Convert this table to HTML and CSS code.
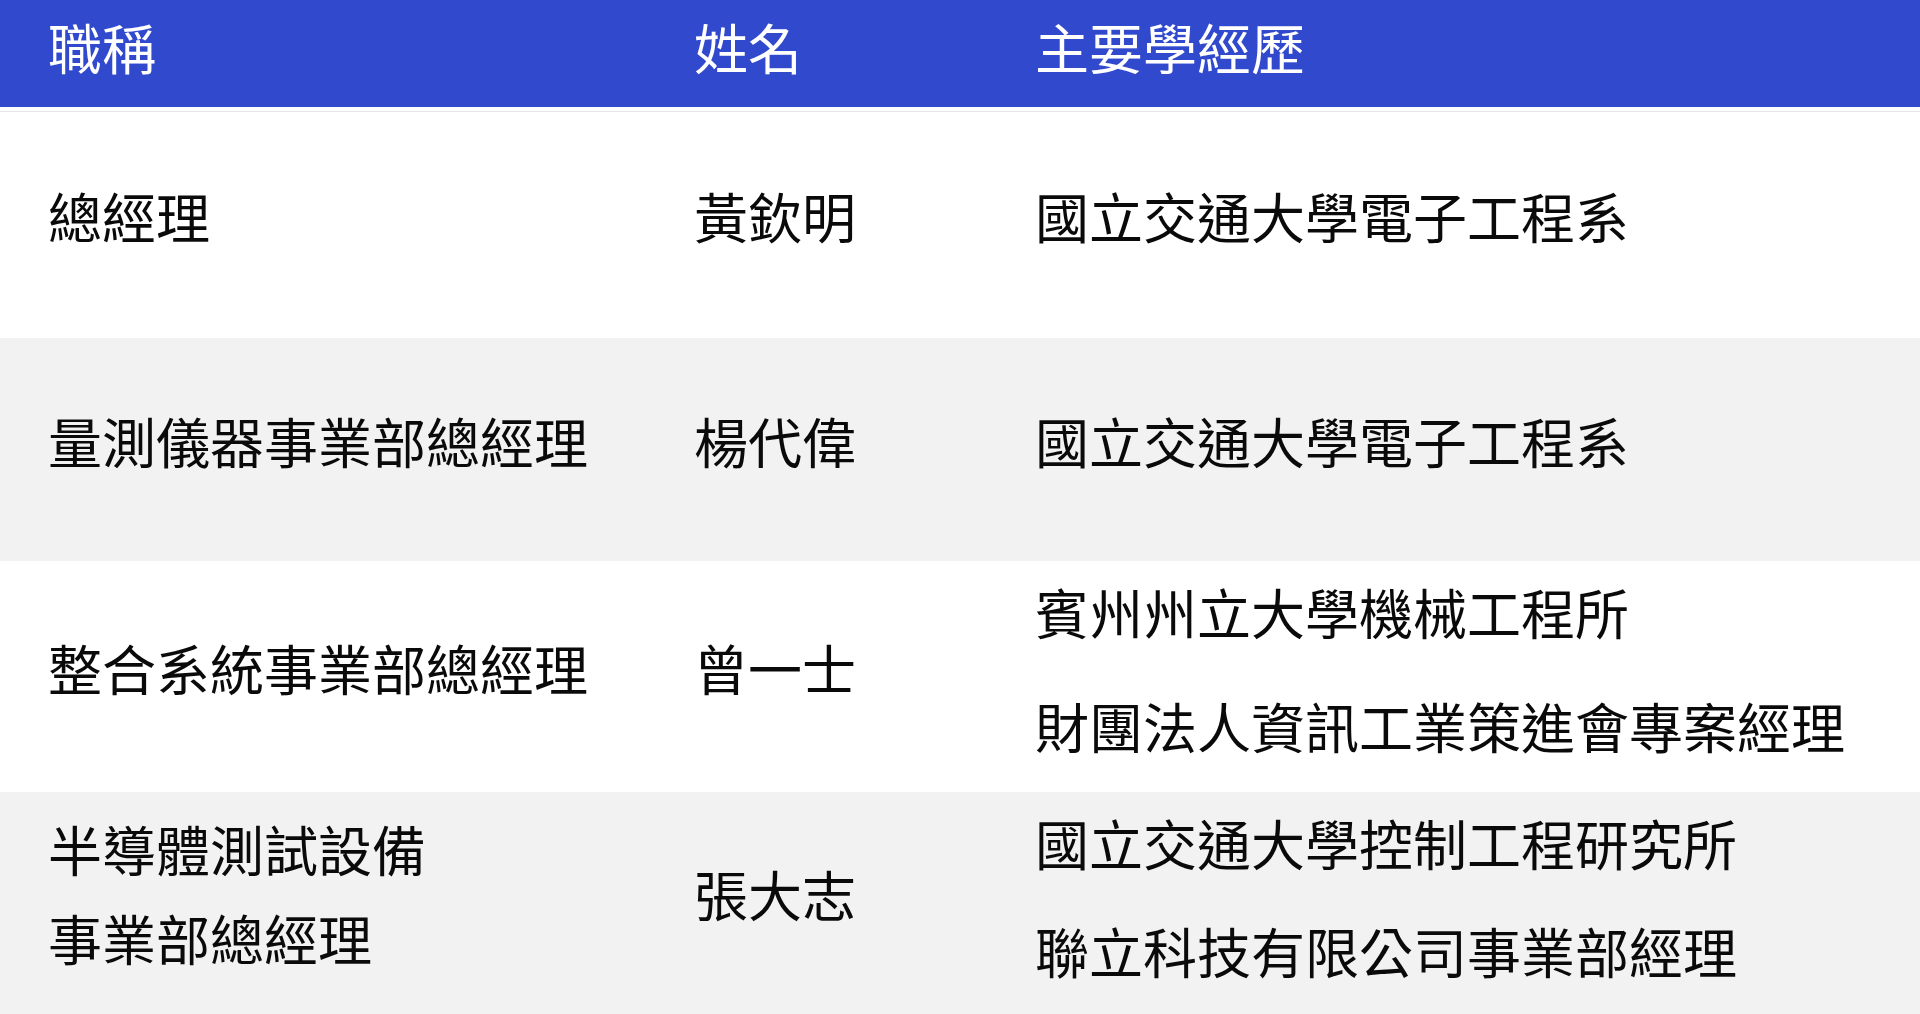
FILE: index.html
```html
<!DOCTYPE html>
<html lang="zh-Hant">
<head>
<meta charset="utf-8">
<title>經營團隊</title>
<link rel="stylesheet" href="styles.css">
</head>
<body>
<div class="team">
  <div class="row head">
    <div class="cell c1">職稱</div>
    <div class="cell c2">姓名</div>
    <div class="cell c3">主要學經歷</div>
  </div>
  <div class="sep"></div>
  <div class="row r1">
    <div class="cell c1">總經理</div>
    <div class="cell c2">黃欽明</div>
    <div class="cell c3"><p>國立交通大學電子工程系</p></div>
  </div>
  <div class="row r2 alt">
    <div class="cell c1">量測儀器事業部總經理</div>
    <div class="cell c2">楊代偉</div>
    <div class="cell c3"><p>國立交通大學電子工程系</p></div>
  </div>
  <div class="row r3">
    <div class="cell c1">整合系統事業部總經理</div>
    <div class="cell c2">曾一士</div>
    <div class="cell c3 multi wide"><p>賓州州立大學機械工程所</p><p>財團法人資訊工業策進會專案經理</p></div>
  </div>
  <div class="row r4 alt">
    <div class="cell c1 two"><span>半導體測試設備</span><span>事業部總經理</span></div>
    <div class="cell c2">張大志</div>
    <div class="cell c3 multi narrow"><p>國立交通大學控制工程研究所</p><p>聯立科技有限公司事業部經理</p></div>
  </div>
</div>
</body>
</html>
```
FILE: styles.css
```css
html, body {
  margin: 0;
  padding: 0;
  background: #ffffff;
}
body {
  font-family: "Noto Sans CJK TC", "Noto Sans CJK SC", "Noto Sans", sans-serif;
  font-size: 54px;
  color: #0a0a0a;
  width: 1920px;
  height: 1014px;
  overflow: hidden;
}
.team {
  display: flex;
  flex-direction: column;
}
.row {
  display: grid;
  grid-template-columns: 680px 340px 1fr;
}
.cell {
  display: flex;
  flex-direction: column;
  justify-content: center;
  padding-bottom: 18px;
  line-height: 86px;
  white-space: nowrap;
}
.c1 { padding-left: 48px; }
.c2 { padding-left: 14px; }
.c3 { padding-left: 15px; }
.cell p { margin: 0; }
.head {
  height: 107px;
  background: #3149cc;
  color: #ffffff;
}
.head .cell { padding-bottom: 14px; }
.sep {
  height: 4px;
  border-bottom: 1px solid #e6e6e6;
}
.r1 { height: 226px; }
.r2 { height: 223px; }
.r3 { height: 231px; }
.r4 { height: 222px; }
.alt { background: #f2f2f2; }
.multi.wide { gap: 28px; padding-bottom: 15px; }
.multi.narrow { gap: 22px; padding-bottom: 13px; }
.two { line-height: 89px; padding-bottom: 20px; }
```
